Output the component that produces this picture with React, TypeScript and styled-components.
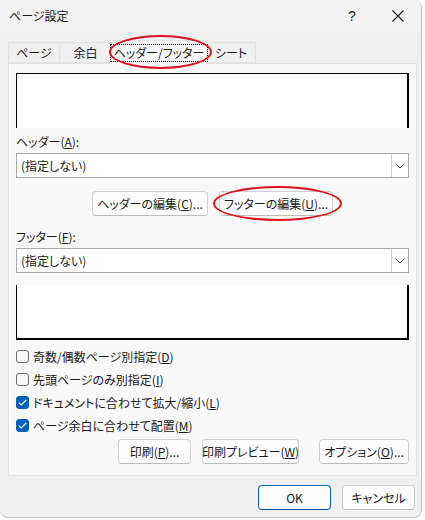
import React from 'react'
import styled, { createGlobalStyle } from 'styled-components'

const GlobalStyle = createGlobalStyle`
  html, body {
    margin: 0;
    padding: 0;
    background: #fbfbfb;
  }
  body {
    font-family: "Noto Sans CJK JP", "Noto Sans", sans-serif;
    font-size: 12px;
    font-feature-settings: "palt";
    color: #1a1a1a;
  }
`

interface tabInterface {
  name: string,
  width: number,
}

interface checkInterface {
  label: string,
  key: string,
  checked: boolean,
}

const tabs: Array<tabInterface> = [
  { name: 'ページ', width: 52 },
  { name: '余白', width: 53 },
  { name: 'ヘッダー/フッター', width: 96 },
  { name: 'シート', width: 50 },
]

const checks: Array<checkInterface> = [
  { label: '奇数/偶数ページ別指定', key: 'D', checked: false },
  { label: '先頭ページのみ別指定', key: 'I', checked: false },
  { label: 'ドキュメントに合わせて拡大/縮小', key: 'L', checked: true },
  { label: 'ページ余白に合わせて配置', key: 'M', checked: true },
]

const Combo: React.FC<{ value: string }> = ({ value }) => (
  <ComboBox>
    <span className='value'>{value}</span>
    <span className='arrow'>
      <svg width='10' height='6' viewBox='0 0 10 6'>
        <path d='M0.5 0.5 L5 5 L9.5 0.5' fill='none' stroke='#555' strokeWidth='1' />
      </svg>
    </span>
  </ComboBox>
)

const App: React.FC = () => {
  return <>
    <GlobalStyle />
    <Window>
      <TitleBar>
        <span className='title'>ページ設定</span>
        <span className='help'>?</span>
        <span className='close'>
          <svg width='12' height='12' viewBox='0 0 12 12'>
            <path d='M0.5 0.5 L11.5 11.5 M11.5 0.5 L0.5 11.5' stroke='#1a1a1a' strokeWidth='1.1' />
          </svg>
        </span>
      </TitleBar>

      <Body>
        <TabRow>
          {tabs.map((t, i) => (
            <Tab key={t.name} $active={i === 2} $width={t.width}>
              {i === 2 ? <span className='focus'>{t.name}</span> : t.name}
            </Tab>
          ))}
        </TabRow>

        <Panel>
          <Preview $side='top' />
          <Label>ヘッダー(<u>A</u>):</Label>
          <Combo value='(指定しない)' />

          <EditRow>
            <Button $width={116}>ヘッダーの編集(<u>C</u>)...</Button>
            <Button $width={114}>フッターの編集(<u>U</u>)...</Button>
          </EditRow>

          <Label>フッター(<u>F</u>):</Label>
          <Combo value='(指定しない)' />
          <Preview $side='bottom' />

          <CheckList>
            {checks.map(c => (
              <CheckRow key={c.key}>
                <CheckBox $checked={c.checked}>
                  {c.checked &&
                    <svg width='9' height='7' viewBox='0 0 9 7'>
                      <path d='M0.8 3.6 L3.2 6 L8.2 1' fill='none' stroke='#fff' strokeWidth='1.2' />
                    </svg>}
                </CheckBox>
                <span>{c.label}(<u>{c.key}</u>)</span>
              </CheckRow>
            ))}
          </CheckList>

          <ActionRow>
            <Button $width={73}>印刷(<u>P</u>)...</Button>
            <Button $width={97}>印刷プレビュー(<u>W</u>)</Button>
            <Button $width={90} $offset={9}>オプション(<u>O</u>)...</Button>
          </ActionRow>
        </Panel>

        <Footer>
          <Button $width={73} $primary>OK</Button>
          <Button $width={73}>キャンセル</Button>
        </Footer>
      </Body>

      <Mark $x={109} $y={35} $w={103} $h={34} />
      <Mark $x={213} $y={186} $w={129} $h={35} />
    </Window>
  </>
}

const Window = styled.div`
  position: relative;
  box-sizing: border-box;
  width: 422px;
  height: 518px;
  background: #f0f0f0;
  border: 1px solid #c4c4c4;
  border-top: none;
  border-left: none;
  border-radius: 0 8px 8px 8px;
  overflow: hidden;
`

const TitleBar = styled.div`
  display: flex;
  align-items: center;
  height: 31px;
  background: #f3f3f3;
  padding-left: 9px;

  .title {
    flex: 1;
    font-size: 12px;
  }
  .help {
    width: 46px;
    text-align: center;
    font-family: "Liberation Sans", sans-serif;
    font-size: 14px;
  }
  .close {
    display: flex;
    justify-content: center;
    width: 46px;
  }
`

const Body = styled.div`
  padding: 8px 6px 0 8px;
`

const TabRow = styled.div`
  display: flex;
  align-items: flex-end;
  height: 24px;
`

const Tab = styled.div<{ $active: boolean, $width: number }>`
  box-sizing: border-box;
  display: flex;
  align-items: center;
  justify-content: center;
  width: ${p => p.$width}px;
  height: ${p => p.$active ? 24 : 21}px;
  margin-bottom: ${p => p.$active ? -1 : 0}px;
  background: ${p => p.$active ? '#f9f9f9' : '#f0f0f0'};
  border: 1px solid #e3e3e3;
  border-bottom: ${p => p.$active ? 'none' : '1px solid #e3e3e3'};
  margin-left: -1px;
  font-size: 12px;
  white-space: nowrap;
  position: relative;
  z-index: ${p => p.$active ? 1 : 0};

  &:first-child {
    margin-left: 0;
  }

  .focus {
    outline: 1px dotted #000;
    outline-offset: 1px;
    padding: 0 2px;
    line-height: 14px;
  }
`

const Panel = styled.div`
  box-sizing: border-box;
  display: flex;
  flex-direction: column;
  width: 409px;
  height: 413px;
  background: #f9f9f9;
  border: 1px solid #e3e3e3;
  padding: 9px 7px 0 7px;
`

const Preview = styled.div<{ $side: 'top' | 'bottom' }>`
  box-sizing: border-box;
  height: 55px;
  width: 393px;
  background: #fff;
  border-left: 1px solid #000;
  border-right: 2px solid #000;
  ${p => p.$side === 'top'
    ? 'border-top: 1px solid #000; margin-bottom: 5px;'
    : 'border-bottom: 2px solid #000; margin-top: 12px;'}
`

const Label = styled.div`
  height: 18px;
  line-height: 18px;
  margin-bottom: 2px;
`

const ComboBox = styled.div`
  box-sizing: border-box;
  display: flex;
  align-items: center;
  width: 393px;
  height: 25px;
  background: #fff;
  border: 1px solid #a8a8a8;

  .value {
    flex: 1;
    padding-left: 4px;
  }
  .arrow {
    box-sizing: border-box;
    display: flex;
    align-items: center;
    justify-content: center;
    width: 17px;
    height: 100%;
    border-left: 1px solid #d0d0d0;
  }
`

const EditRow = styled.div`
  display: flex;
  justify-content: center;
  gap: 11px;
  margin: 13px 0 12px 0;
`

const Button = styled.div<{ $width: number, $primary?: boolean, $offset?: number }>`
  box-sizing: border-box;
  display: flex;
  align-items: center;
  justify-content: center;
  width: ${p => p.$width}px;
  height: 25px;
  margin-left: ${p => p.$offset ?? 0}px;
  background: #fdfdfd;
  border: 1px solid ${p => p.$primary ? '#0067c0' : '#d0d0d0'};
  border-bottom-color: ${p => p.$primary ? '#0050a0' : '#bcbcbc'};
  border-radius: 4px;
  font-size: 12px;
  white-space: nowrap;
`

const CheckList = styled.div`
  display: flex;
  flex-direction: column;
  margin-top: 5px;
`

const CheckRow = styled.div`
  display: flex;
  align-items: center;
  gap: 4px;
  height: 23px;
`

const CheckBox = styled.span<{ $checked: boolean }>`
  box-sizing: border-box;
  display: flex;
  align-items: center;
  justify-content: center;
  width: 13px;
  height: 13px;
  border-radius: 3px;
  background: ${p => p.$checked ? '#005fb8' : '#fafafa'};
  border: 1px solid ${p => p.$checked ? '#005fb8' : '#6e6e6e'};
`

const ActionRow = styled.div`
  display: flex;
  justify-content: flex-end;
  gap: 11px;
  margin-top: 2px;
`

const Footer = styled.div`
  display: flex;
  justify-content: flex-end;
  gap: 11px;
  padding: 9px 0 0 0;
`

const Mark = styled.div<{ $x: number, $y: number, $w: number, $h: number }>`
  position: absolute;
  left: ${p => p.$x}px;
  top: ${p => p.$y}px;
  width: ${p => p.$w}px;
  height: ${p => p.$h}px;
  box-sizing: border-box;
  border: 2px solid #e0141e;
  border-radius: 50%;
  pointer-events: none;
  z-index: 5;
`

export default App
